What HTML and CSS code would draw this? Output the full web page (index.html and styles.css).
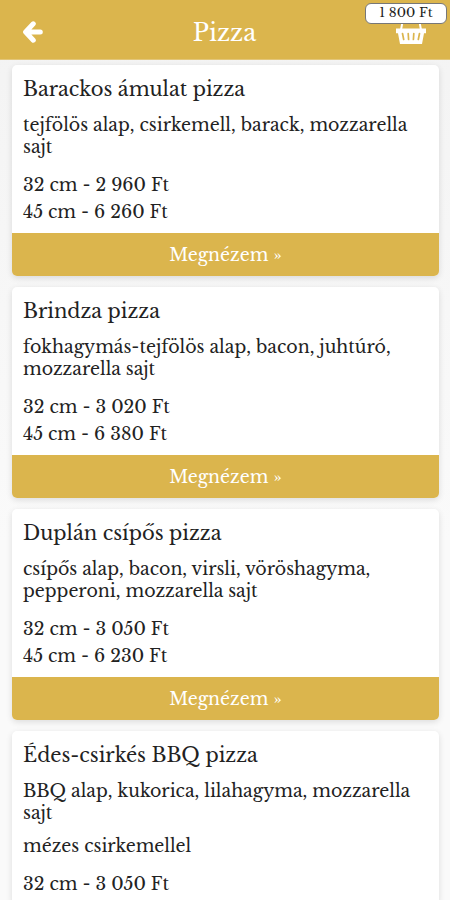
FILE: index.html
```html
<!DOCTYPE html>
<html lang="hu">
<head>
    <meta charset="UTF-8">
    <meta name="viewport" content="width=device-width, initial-scale=1.0">
    <title>Pizza</title>
    <link rel="stylesheet" href="styles.css">
</head>
<body>
    <header class="header">
        <a href="#" class="back-button" aria-label="Vissza">
            <svg width="20" height="22" viewBox="0 0 20 22">
                <path d="M10.3 2.8 L2.6 11 L10.3 19.2 M3.5 11 H17.3" fill="none" stroke="#fff" stroke-width="5" stroke-linecap="round" stroke-linejoin="round"/>
            </svg>
        </a>
        <h1>Pizza</h1>
        <a href="#" class="basket" aria-label="Kosár">
            <svg width="30" height="28" viewBox="0 0 30 28">
                <path d="M5 13 L7 2 H23 L25 13" fill="none" stroke="#fff" stroke-width="2"/>
                <path d="M0 11.5 H30 V16.2 H28 L26 27 H4 L2 16.2 H0 Z" fill="#fff"/>
                <path d="M6.5 16.5 L7.7 22.5 M12.2 16.5 L12.6 22.5 M17.8 16.5 L17.4 22.5 M23.5 16.5 L22.3 22.5" stroke="#dbb54d" stroke-width="1.7" stroke-linecap="round"/>
            </svg>
            <span class="basket-total">1 800 Ft</span>
        </a>
    </header>

    <main class="product-list">
        <div class="card">
            <div class="card-body">
                <h2>Barackos ámulat pizza</h2>
                <p>tejfölös alap, csirkemell, barack, mozzarella sajt</p>
                <ul class="prices">
                    <li>32 cm - 2 960 Ft</li>
                    <li>45 cm - 6 260 Ft</li>
                </ul>
            </div>
            <a href="#" class="card-button">Megnézem »</a>
        </div>

        <div class="card">
            <div class="card-body">
                <h2>Brindza pizza</h2>
                <p>fokhagymás-tejfölös alap, bacon, juhtúró, mozzarella sajt</p>
                <ul class="prices">
                    <li>32 cm - 3 020 Ft</li>
                    <li>45 cm - 6 380 Ft</li>
                </ul>
            </div>
            <a href="#" class="card-button">Megnézem »</a>
        </div>

        <div class="card">
            <div class="card-body">
                <h2>Duplán csípős pizza</h2>
                <p>csípős alap, bacon, virsli, vöröshagyma, pepperoni, mozzarella sajt</p>
                <ul class="prices">
                    <li>32 cm - 3 050 Ft</li>
                    <li>45 cm - 6 230 Ft</li>
                </ul>
            </div>
            <a href="#" class="card-button">Megnézem »</a>
        </div>

        <div class="card">
            <div class="card-body">
                <h2>Édes-csirkés BBQ pizza</h2>
                <p>BBQ alap, kukorica, lilahagyma, mozzarella sajt</p>
                <p>mézes csirkemellel</p>
                <ul class="prices">
                    <li>32 cm - 3 050 Ft</li>
                </ul>
            </div>
        </div>
    </main>
</body>
</html>
```
FILE: styles.css
```css
* {
    box-sizing: border-box;
}

body {
    font-family: "Libre Baskerville", "Liberation Serif", serif;
    margin: 0;
    height: 100vh;
    overflow: hidden;
    background: linear-gradient(#f3f3f3, #fafafa 60%);
    color: #222;
    display: flex;
    flex-direction: column;
}

.header {
    flex: none;
    height: 60px;
    padding: 5px 24px 0 23px;
    background-color: #dbb54d;
    border-bottom: 1px solid #e3c67a;
    display: grid;
    grid-template-columns: 1fr auto 1fr;
    align-items: center;
    color: white;
}

.header h1 {
    margin: 0;
    font-size: 23.6px;
    font-weight: normal;
}

.back-button {
    display: flex;
}

.basket {
    position: relative;
    justify-self: end;
    display: flex;
    margin-bottom: 2px;
}

.basket-total {
    position: absolute;
    top: -14px;
    right: -21px;
    width: 82px;
    height: 21px;
    line-height: 18px;
    text-align: center;
    font-size: 13px;
    color: #222;
    background-color: white;
    border: 1px solid #777;
    border-radius: 6px;
}

.product-list {
    padding: 5px 11px 0 12px;
    display: flex;
    flex-direction: column;
    gap: 11px;
}

.card {
    flex: none;
    background-color: white;
    border-radius: 5px;
    box-shadow: 0 2px 6px rgba(0, 0, 0, 0.12);
    overflow: hidden;
}

.card-body {
    padding: 11px 11px 7px;
}

.card h2 {
    margin: 0 0 12px;
    font-size: 19.5px;
    font-weight: normal;
    line-height: 26px;
}

.card p {
    margin: 0 0 11px;
    font-size: 17.4px;
    line-height: 22px;
}

.prices {
    list-style: none;
    margin: 14px 0 0;
    padding: 0;
    font-size: 17.4px;
    line-height: 27px;
}

.card-button {
    display: block;
    height: 43px;
    line-height: 45px;
    background-color: #dbb54d;
    color: white;
    text-align: center;
    text-decoration: none;
    font-size: 17.4px;
}
```
